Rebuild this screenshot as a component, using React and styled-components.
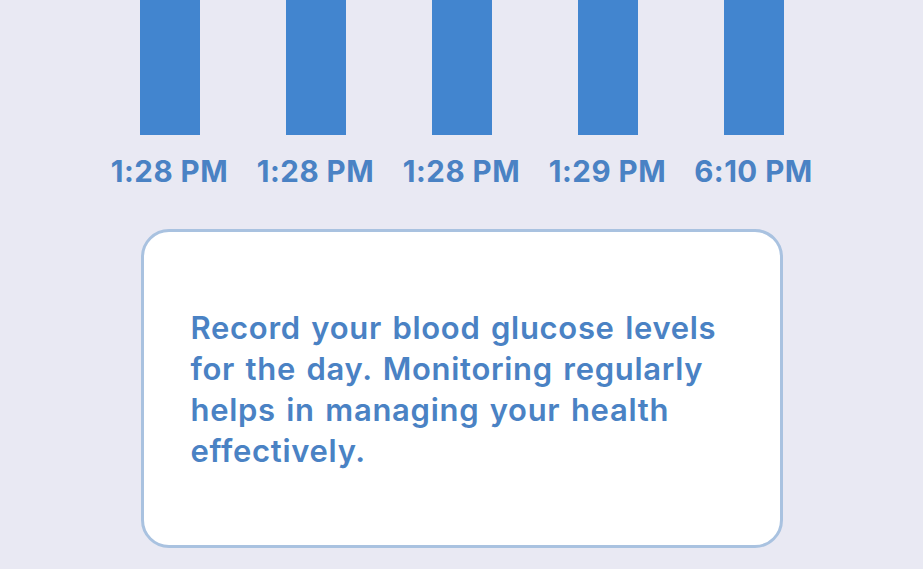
import React from 'react';
import styled, { createGlobalStyle } from 'styled-components';

const GlobalStyle = createGlobalStyle`
    html, body {
        margin: 0;
        padding: 0;
        background: #e9e9f3;
    }

    body {
        font-family: Inter, "Noto Sans", "Liberation Sans", sans-serif;
        -webkit-font-smoothing: antialiased;
    }
`;

const readings = [
    { time: '1:28 PM', height: 135 },
    { time: '1:28 PM', height: 135 },
    { time: '1:28 PM', height: 135 },
    { time: '1:29 PM', height: 135 },
    { time: '6:10 PM', height: 135 },
];

const App = () => {
    return (
        <>
            <GlobalStyle />
            <Screen>
                <Chart>
                    {readings.map((r, i) => (
                        <Column key={i}>
                            <BarArea>
                                <Bar $height={r.height} />
                            </BarArea>
                            <TimeLabel>{r.time}</TimeLabel>
                        </Column>
                    ))}
                </Chart>
                <InfoCard>
                    <InfoText>
                        Record your blood glucose levels for the day. Monitoring regularly
                        helps in managing your health effectively.
                    </InfoText>
                </InfoCard>
            </Screen>
        </>
    );
};

const Screen = styled.div`
    width: 923px;
    height: 569px;
    overflow: hidden;
    display: flex;
    flex-direction: column;
    align-items: center;
`;

const Chart = styled.div`
    display: grid;
    grid-template-columns: repeat(5, 146px);
`;

const Column = styled.div`
    display: flex;
    flex-direction: column;
    align-items: center;
`;

const BarArea = styled.div`
    height: 135px;
    display: flex;
    align-items: flex-end;
`;

const Bar = styled.div`
    width: 60px;
    height: ${(p) => p.$height}px;
    background: #4285cf;
`;

const TimeLabel = styled.div`
    margin-top: 18px;
    font-size: 29.5px;
    line-height: 36px;
    font-weight: 700;
    letter-spacing: 0.5px;
    color: #4a82c4;
    white-space: nowrap;
`;

const InfoCard = styled.div`
    margin-top: 40px;
    box-sizing: border-box;
    width: 642px;
    height: 319px;
    background: #ffffff;
    border: 3px solid #a9c2e0;
    border-radius: 28px;
    display: flex;
    align-items: center;
    padding: 0 52px 0 47px;
`;

const InfoText = styled.p`
    margin: 0;
    font-size: 31px;
    line-height: 41px;
    font-weight: 600;
    letter-spacing: 0.7px;
    word-spacing: 2px;
    color: #4a82c4;
`;

export default App;
